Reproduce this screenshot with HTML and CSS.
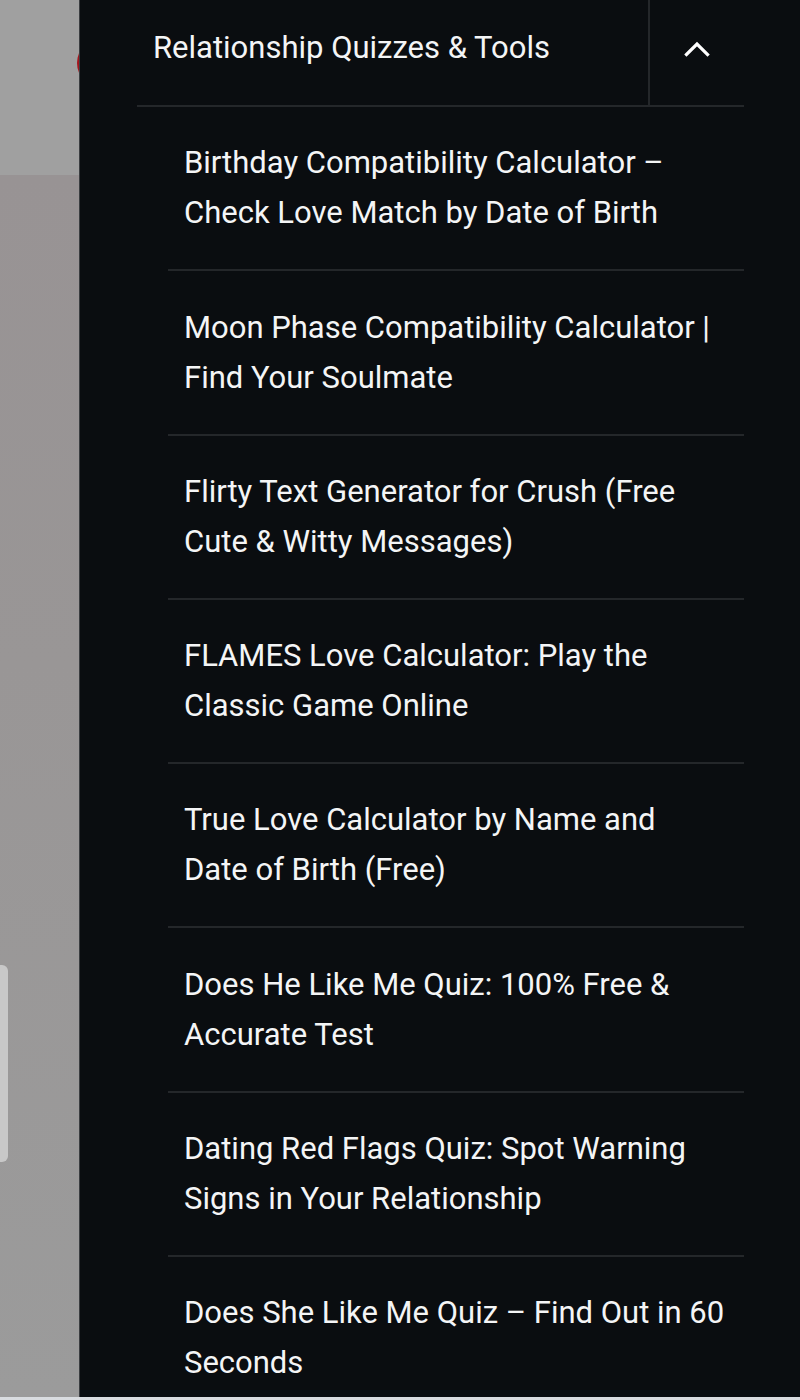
FILE: index.html
```html
<!DOCTYPE html>
<html lang="en">
<head>
<meta charset="utf-8">
<title>Relationship Quizzes &amp; Tools</title>
<link rel="stylesheet" href="styles.css">
</head>
<body>
<div class="screen">
  <div class="backdrop">
    <div class="bd-header"></div>
    <div class="bd-content">
      <div class="bd-card"></div>
    </div>
    <span class="bd-logo"></span>
  </div>
  <nav class="panel">
    <div class="menu-head">
      <a class="menu-title" href="#">Relationship Quizzes &amp; Tools</a>
      <button class="menu-toggle" aria-label="Collapse">
        <svg width="26" height="16" viewBox="0 0 26 16"><path d="M2.5 13.5 L13 3 L23.5 13.5" fill="none" stroke="#ffffff" stroke-width="3.2" stroke-linecap="square" stroke-linejoin="miter"/></svg>
      </button>
    </div>
    <ul class="submenu">
      <li><a href="#">Birthday Compatibility Calculator – Check Love Match by Date of Birth</a></li>
      <li><a href="#">Moon Phase Compatibility Calculator | Find Your Soulmate</a></li>
      <li><a href="#">Flirty Text Generator for Crush (Free Cute &amp; Witty Messages)</a></li>
      <li><a href="#">FLAMES Love Calculator: Play the Classic Game Online</a></li>
      <li><a href="#">True Love Calculator by Name and Date of Birth (Free)</a></li>
      <li><a href="#">Does He Like Me Quiz: 100% Free &amp; Accurate Test</a></li>
      <li><a href="#">Dating Red Flags Quiz: Spot Warning Signs in Your Relationship</a></li>
      <li><a href="#">Does She Like Me Quiz – Find Out in 60 Seconds</a></li>
    </ul>
  </nav>
</div>
<div class="bottom-strip"></div>
</body>
</html>
```
FILE: styles.css
```css
html, body {
  margin: 0;
  padding: 0;
  background: #d9dce0;
}
body {
  font-family: Roboto, "Liberation Sans", Arial, sans-serif;
  width: 800px;
  height: 1400px;
  overflow: hidden;
}
.screen {
  display: flex;
  height: 1397px;
  overflow: hidden;
}
.backdrop {
  position: relative;
  width: 80px;
  flex: 0 0 80px;
  display: flex;
  flex-direction: column;
  background: #999495;
}
.bd-header {
  height: 175px;
  background: #a0a0a0;
}
.bd-content {
  flex: 1;
  background: linear-gradient(180deg, #989394 0%, #999696 40%, #9b9b9b 100%);
  padding-top: 790px;
}
.bd-card {
  width: 8px;
  height: 197px;
  background: #c8c8c8;
  border-radius: 0 6px 6px 0;
}
.bd-logo {
  position: absolute;
  left: 77px;
  top: 38px;
  width: 50px;
  height: 50px;
  border-radius: 50%;
  background: #a4141c;
}
.panel {
  position: relative;
  z-index: 1;
  flex: 1;
  background: #0a0d10;
  color: #f4f5f6;
  border-left: 1px solid #3a3d40;
  margin-left: -1px;
}
.menu-head {
  display: flex;
  margin: 0 56px 0 57px;
  border-bottom: 2px solid #24272a;
  height: 107px;
  box-sizing: border-box;
}
.menu-title {
  flex: 1;
  color: #f4f5f6;
  text-decoration: none;
  font-size: 31px;
  line-height: 50px;
  padding: 23px 16px 0;
  white-space: nowrap;
}
.menu-toggle {
  width: 96px;
  border: 0;
  border-left: 2px solid #24272a;
  background: transparent;
  display: flex;
  align-items: center;
  justify-content: center;
  padding: 0 0 8px;
  cursor: pointer;
}
.submenu {
  list-style: none;
  margin: 0 56px 0 88px;
  padding: 0;
}
.submenu li {
  border-bottom: 2px solid #24272a;
}
.submenu a {
  display: block;
  color: #f4f5f6;
  text-decoration: none;
  font-size: 31px;
  line-height: 50px;
  padding: 31.3px 19.5px 31px 16px;
}
.bottom-strip {
  height: 3px;
  background: #d9dce0;
}
```
